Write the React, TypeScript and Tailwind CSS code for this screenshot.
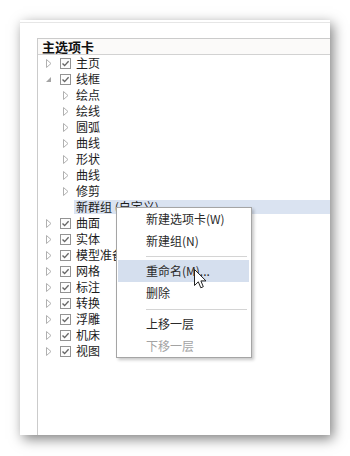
import React from "react";

const Tri = () => (
  <svg width="6" height="9" className="shrink-0">
    <polygon points="0.5,0.5 5,4.5 0.5,8.5" fill="none" stroke="#b0b0b0" strokeWidth="1" />
  </svg>
);

const Exp = () => (
  <svg width="5" height="5" className="shrink-0">
    <polygon points="5,0 5,5 0,5" fill="#a4a4a4" />
  </svg>
);

const Check = () => (
  <svg width="11" height="11" className="shrink-0">
    <rect x="0.5" y="0.5" width="10" height="10" fill="#fdfdfd" stroke="#939393" />
    <polyline points="2.5,5.5 4.6,7.6 8.6,3.2" fill="none" stroke="#666" strokeWidth="1.4" />
  </svg>
);

type Row = { t: string; level: 0 | 1; exp?: boolean; noTri?: boolean; sel?: boolean };

const rows: Row[] = [
  { t: "主页", level: 0 },
  { t: "线框", level: 0, exp: true },
  { t: "绘点", level: 1 },
  { t: "绘线", level: 1 },
  { t: "圆弧", level: 1 },
  { t: "曲线", level: 1 },
  { t: "形状", level: 1 },
  { t: "曲线", level: 1 },
  { t: "修剪", level: 1 },
  { t: "新群组 (自定义)", level: 1, noTri: true, sel: true },
  { t: "曲面", level: 0 },
  { t: "实体", level: 0 },
  { t: "模型准备", level: 0 },
  { t: "网格", level: 0 },
  { t: "标注", level: 0 },
  { t: "转换", level: 0 },
  { t: "浮雕", level: 0 },
  { t: "机床", level: 0 },
  { t: "视图", level: 0 },
];

const TreeRow = ({ r }: { r: Row }) => {
  if (r.level === 0) {
    return (
      <div className="flex items-center h-[16px]">
        <div className="w-[22px] flex items-center pl-[8px]">{r.exp ? <Exp /> : <Tri />}</div>
        <div className="w-[16px] flex items-center">
          <Check />
        </div>
        <div className="text-[12px] leading-[16px] text-[#1c1c1c] whitespace-nowrap">{r.t}</div>
      </div>
    );
  }
  return (
    <div className="flex items-center h-[16px]">
      <div className="w-[36px] flex items-center pl-[25px]">{r.noTri ? null : <Tri />}</div>
      {r.sel ? (
        <div className="flex-1 h-[14px] bg-[#dae3f1] pl-[2px] text-[12px] leading-[14px] text-[#1c1c1c] whitespace-nowrap">
          {r.t}
        </div>
      ) : (
        <div className="pl-[2px] text-[12px] leading-[16px] text-[#1c1c1c] whitespace-nowrap">{r.t}</div>
      )}
    </div>
  );
};

const MenuItem = ({ t, hl, dis }: { t: string; hl?: boolean; dis?: boolean }) => (
  <div
    className={
      "h-[22px] mx-[1px] mr-[2px] pl-[28px] flex items-center text-[12px] whitespace-nowrap " +
      (hl ? "bg-[#d5dfee] " : "") +
      (dis ? "text-[#a3a3a3]" : "text-[#2a2a2a]")
    }
  >
    {t}
  </div>
);

const Sep = ({ h }: { h: string }) => (
  <div className={"flex items-end pl-[29px] pr-[4px] pb-[3px] " + h}>
    <div className="h-px w-full bg-[#d4d4d4]" />
  </div>
);

export default function App() {
  return (
    <div
      className="relative w-[350px] h-[456px] bg-white overflow-hidden pt-[20px] pl-[20px]"
      style={{ fontFamily: '"Noto Sans CJK SC", "Noto Sans", sans-serif' }}
    >
      <div className="w-[310px] h-[415px] bg-white flex flex-col shadow-[3px_4px_12px_rgba(0,0,0,0.5)]">
        <div className="mt-[2px] h-px bg-[#e6e6e6]" />
        <div className="mt-[15px] ml-[17px] flex-1 border-l border-t border-[#cbcbcb] flex flex-col">
          <div className="h-[16px] border-b border-[#d2d2d2] bg-[#fbfaf9] pl-[4px] text-[13px] leading-[15px] font-bold text-[#111]">
            主选项卡
          </div>
          {rows.map((r, i) => (
            <TreeRow key={i} r={r} />
          ))}
        </div>
      </div>

      <div className="absolute left-[116px] top-[207px] w-[136px] h-[151px] bg-white border border-[#a5a5a5] shadow-[2px_2px_3px_rgba(0,0,0,0.22)] flex flex-col">
        <MenuItem t="新建选项卡(W)" />
        <MenuItem t="新建组(N)" />
        <Sep h="h-[8px]" />
        <MenuItem t="重命名(M)..." hl />
        <MenuItem t="删除" />
        <Sep h="h-[9px]" />
        <MenuItem t="上移一层" />
        <MenuItem t="下移一层" dis />
      </div>

      <svg className="absolute left-[194px] top-[269px]" width="13" height="21" viewBox="0 0 13 21">
        <path
          d="M0.5,0.5 L0.5,16.5 L4.3,12.8 L6.8,18.8 L9.3,17.7 L6.9,11.9 L12,11.9 Z"
          fill="#fff"
          stroke="#222"
          strokeWidth="1"
          strokeLinejoin="miter"
        />
      </svg>
    </div>
  );
}
